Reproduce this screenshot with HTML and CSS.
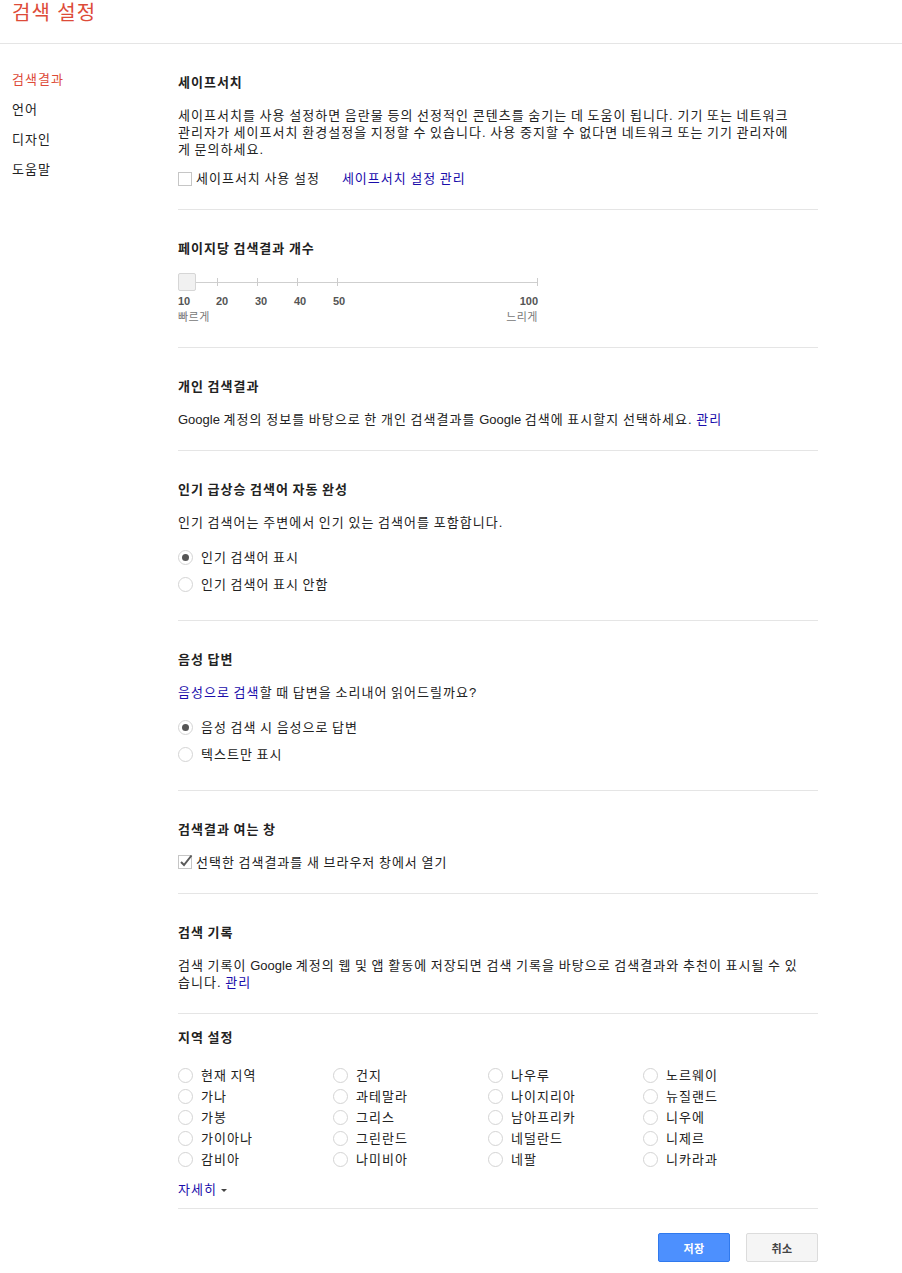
FILE: index.html
```html
<!DOCTYPE html>
<html lang="ko">
<head>
<meta charset="utf-8">
<title>검색 설정</title>
<link rel="stylesheet" href="styles.css">
</head>
<body>
<header class="topbar">
  <h1 class="page-title">검색 설정</h1>
</header>
<div class="layout">
  <nav class="sidenav">
    <a class="nav-item active">검색결과</a>
    <a class="nav-item">언어</a>
    <a class="nav-item">디자인</a>
    <a class="nav-item">도움말</a>
  </nav>
  <main class="content">
    <section class="section">
      <h2 class="section-title">세이프서치</h2>
      <p class="desc">세이프서치를 사용 설정하면 음란물 등의 선정적인 콘텐츠를 숨기는 데 도움이 됩니다. 기기 또는 네트워크 관리자가 세이프서치 환경설정을 지정할 수 있습니다. 사용 중지할 수 없다면 네트워크 또는 기기 관리자에게 문의하세요.</p>
      <div class="inline-row">
        <label class="check"><span class="box"></span>세이프서치 사용 설정</label>
        <a class="link">세이프서치 설정 관리</a>
      </div>
    </section>

    <section class="section section-slider">
      <h2 class="section-title">페이지당 검색결과 개수</h2>
      <div class="slider">
        <div class="track">
          <span class="seg"></span><span class="seg"></span><span class="seg"></span><span class="seg"></span><span class="seg seg-long"></span>
        </div>
        <span class="thumb"></span>
      </div>
      <div class="scale">
        <span>10</span><span>20</span><span>30</span><span>40</span><span>50</span><span class="scale-end">100</span>
      </div>
      <div class="speed">
        <span>빠르게</span><span>느리게</span>
      </div>
    </section>

    <section class="section">
      <h2 class="section-title">개인 검색결과</h2>
      <p class="desc"><span class="en">Google</span> 계정의 정보를 바탕으로 한 개인 검색결과를 <span class="en">Google</span> 검색에 표시할지 선택하세요. <a class="link">관리</a></p>
    </section>

    <section class="section">
      <h2 class="section-title">인기 급상승 검색어 자동 완성</h2>
      <p class="desc">인기 검색어는 주변에서 인기 있는 검색어를 포함합니다.</p>
      <div class="radio-list">
        <label class="radio"><span class="dot checked"></span>인기 검색어 표시</label>
        <label class="radio"><span class="dot"></span>인기 검색어 표시 안함</label>
      </div>
    </section>

    <section class="section">
      <h2 class="section-title">음성 답변</h2>
      <p class="desc"><a class="link">음성으로 검색</a>할 때 답변을 소리내어 읽어드릴까요?</p>
      <div class="radio-list">
        <label class="radio"><span class="dot checked"></span>음성 검색 시 음성으로 답변</label>
        <label class="radio"><span class="dot"></span>텍스트만 표시</label>
      </div>
    </section>

    <section class="section">
      <h2 class="section-title">검색결과 여는 창</h2>
      <div class="inline-row">
        <label class="check"><svg class="checkbox-svg" width="16" height="16" viewBox="0 0 16 16"><rect x="0.5" y="2.5" width="13" height="13" fill="#fff" stroke="#c6c6c6"/><path d="M3 9 L6 12 L13.5 2.5" fill="none" stroke="#5a5a5a" stroke-width="2"/></svg>선택한 검색결과를 새 브라우저 창에서 열기</label>
      </div>
    </section>

    <section class="section">
      <h2 class="section-title">검색 기록</h2>
      <p class="desc">검색 기록이 <span class="en">Google</span> 계정의 웹 및 앱 활동에 저장되면 검색 기록을 바탕으로 검색결과와 추천이 표시될 수 있습니다. <a class="link">관리</a></p>
    </section>

    <section class="section section-region">
      <h2 class="section-title">지역 설정</h2>
      <div class="region-grid">
        <label class="radio"><span class="dot"></span>현재 지역</label>
        <label class="radio"><span class="dot"></span>가나</label>
        <label class="radio"><span class="dot"></span>가봉</label>
        <label class="radio"><span class="dot"></span>가이아나</label>
        <label class="radio"><span class="dot"></span>감비아</label>
        <label class="radio"><span class="dot"></span>건지</label>
        <label class="radio"><span class="dot"></span>과테말라</label>
        <label class="radio"><span class="dot"></span>그리스</label>
        <label class="radio"><span class="dot"></span>그린란드</label>
        <label class="radio"><span class="dot"></span>나미비아</label>
        <label class="radio"><span class="dot"></span>나우루</label>
        <label class="radio"><span class="dot"></span>나이지리아</label>
        <label class="radio"><span class="dot"></span>남아프리카</label>
        <label class="radio"><span class="dot"></span>네덜란드</label>
        <label class="radio"><span class="dot"></span>네팔</label>
        <label class="radio"><span class="dot"></span>노르웨이</label>
        <label class="radio"><span class="dot"></span>뉴질랜드</label>
        <label class="radio"><span class="dot"></span>니우에</label>
        <label class="radio"><span class="dot"></span>니제르</label>
        <label class="radio"><span class="dot"></span>니카라과</label>
      </div>
      <a class="link more">자세히<span class="caret"></span></a>
    </section>

    <div class="actions">
      <button class="btn btn-primary">저장</button>
      <button class="btn btn-default">취소</button>
    </div>
  </main>
</div>
</body>
</html>
```

FILE: styles.css
```css
html, body {
  margin: 0;
  padding: 0;
  background: #fff;
}
body {
  font-family: "Liberation Sans", "Noto Sans CJK KR", sans-serif;
  font-size: 13px;
  color: #222;
  line-height: 17px;
  letter-spacing: 1px;
  word-spacing: -1px;
}
.en {
  letter-spacing: 0;
}
.topbar {
  height: 43px;
  border-bottom: 1px solid #e5e5e5;
  padding-left: 12px;
}
.page-title {
  margin: 0;
  font-size: 20px;
  line-height: 26px;
  font-weight: normal;
  letter-spacing: 1px;
  word-spacing: 0;
  color: #dd4b39;
}
.layout {
  display: flex;
}
.sidenav {
  width: 166px;
  padding: 21px 0 0 12px;
  display: flex;
  flex-direction: column;
}
.nav-item {
  display: block;
  line-height: 30px;
  color: #222;
}
.nav-item.active {
  color: #dd4b39;
}
.content {
  width: 640px;
}
.section {
  padding: 30px 0 22px;
  border-bottom: 1px solid #e5e5e5;
}
.section-title {
  margin: 0 0 16px;
  font-size: 13px;
  line-height: 17px;
  font-weight: bold;
  color: #222;
}
.desc {
  margin: 0;
  max-width: 621.5px;
  letter-spacing: 1.04px;
  word-spacing: -1.04px;
}
.link {
  color: #1a0dab;
  cursor: pointer;
}
.inline-row {
  margin-top: 12px;
  display: flex;
  align-items: center;
}
.section-title + .inline-row {
  margin-top: 16px;
}
.check {
  display: flex;
  align-items: center;
}
.box {
  width: 14px;
  height: 14px;
  box-sizing: border-box;
  border: 1px solid #c6c6c6;
  background: #fff;
  margin-right: 4px;
}
.checkbox-svg {
  margin: -3px 2px 0 0;
}
.inline-row .link {
  margin-left: 22px;
}

/* slider */
.slider {
  position: relative;
  width: 360px;
  height: 18px;
  display: flex;
  align-items: center;
}
.track {
  display: flex;
  align-items: center;
  width: 360px;
}
.seg {
  width: 40px;
  height: 8px;
  box-sizing: border-box;
  border-right: 1px solid #ccc;
  background: linear-gradient(#cfcfcf, #cfcfcf) no-repeat center / 100% 1px;
}
.seg-long {
  width: 200px;
}
.thumb {
  position: absolute;
  left: 0;
  top: 0;
  width: 18px;
  height: 18px;
  box-sizing: border-box;
  border: 1px solid #d6d6d6;
  border-radius: 2px;
  background: #f1f1f1;
}
.scale {
  width: 360px;
  margin-top: 3px;
  display: grid;
  grid-template-columns: 38px 39px 39px 39px 1fr auto;
  font-size: 11px;
  line-height: 14px;
  font-weight: bold;
  letter-spacing: 0;
  color: #555;
}
.speed {
  width: 360px;
  margin-top: 2px;
  display: flex;
  justify-content: space-between;
  font-size: 11px;
  line-height: 14px;
  letter-spacing: 0.5px;
  color: #777;
}
.section-slider {
  padding-bottom: 23px;
}

/* radios */
.radio-list {
  margin-top: 13px;
  display: flex;
  flex-direction: column;
}
.radio {
  display: flex;
  align-items: center;
  height: 27px;
}
.dot {
  width: 15px;
  height: 15px;
  box-sizing: border-box;
  border: 1px solid #d4d4d4;
  border-radius: 50%;
  background: #fff;
  margin-right: 8px;
  display: flex;
  align-items: center;
  justify-content: center;
}
.dot.checked::after {
  content: "";
  width: 7px;
  height: 7px;
  border-radius: 50%;
  background: #555;
}

/* region */
.section-region {
  padding: 15px 0 10px;
}
.region-grid {
  margin-top: 19px;
  display: grid;
  grid-auto-flow: column;
  grid-template-rows: repeat(5, 21px);
  grid-template-columns: repeat(4, 155px);
}
.region-grid .radio {
  height: 21px;
}
.more {
  display: inline-flex;
  align-items: center;
  margin-top: 11px;
}
.caret {
  width: 0;
  height: 0;
  margin-left: 4px;
  margin-top: 2px;
  border-left: 3px solid transparent;
  border-right: 3px solid transparent;
  border-top: 3px solid #444;
}

/* buttons */
.actions {
  display: flex;
  justify-content: flex-end;
  gap: 16px;
  margin-top: 24px;
}
.btn {
  width: 72px;
  height: 29px;
  border-radius: 2px;
  font-family: "Liberation Sans", "Noto Sans CJK KR", sans-serif;
  font-size: 11px;
  font-weight: bold;
  letter-spacing: 0.5px;
  padding: 0;
  cursor: pointer;
}
.btn-primary {
  background: #4d90fe;
  border: 1px solid #3079ed;
  color: #fff;
}
.btn-default {
  background: #f5f5f5;
  border: 1px solid #dcdcdc;
  color: #444;
}
```
